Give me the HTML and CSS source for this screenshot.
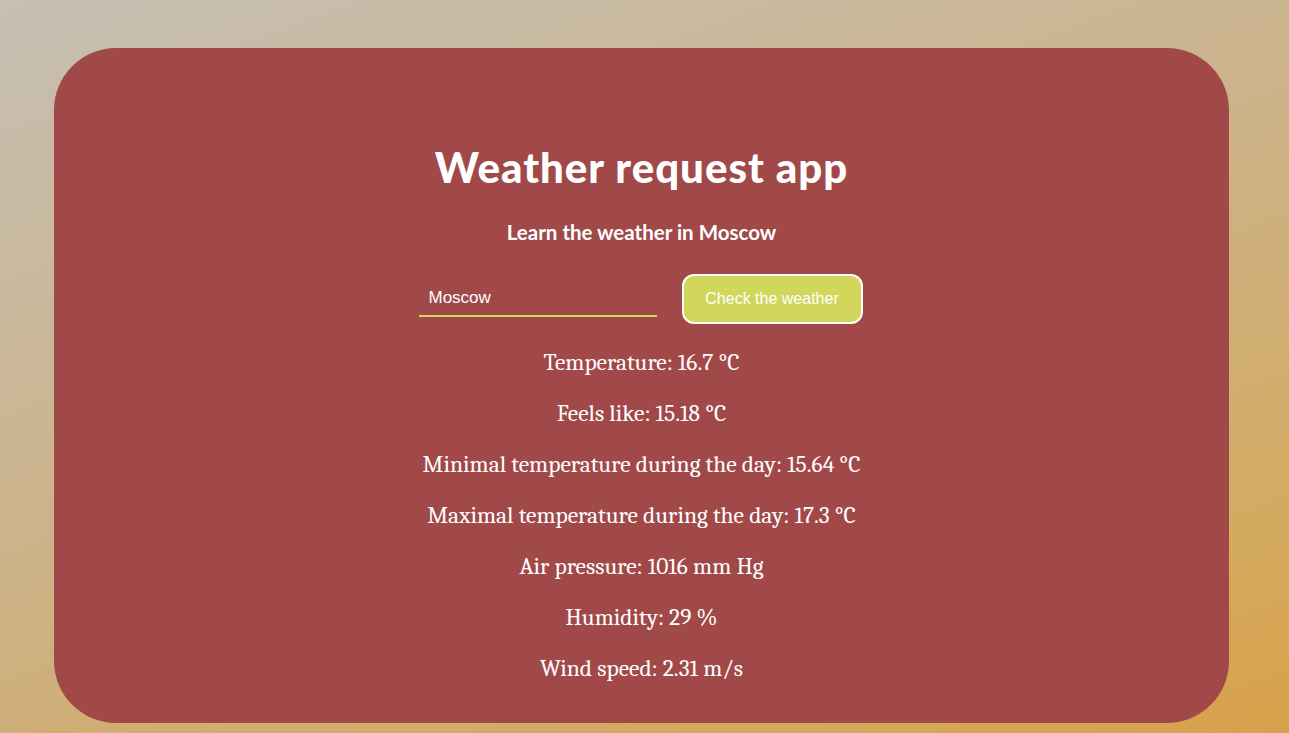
FILE: index.html
```html
<!DOCTYPE html>
<html lang="en">
<head>
<meta charset="utf-8">
<title>Weather request app</title>
<link rel="stylesheet" href="styles.css">
</head>
<body>
<main class="card">
  <h1 class="title">Weather request app</h1>
  <p class="subtitle">Learn the weather in Moscow</p>
  <form class="search">
    <input class="city" type="text" value="Moscow">
    <button class="check" type="button">Check the weather</button>
  </form>
  <section class="results">
    <p class="row">Temperature: 16.7 °C</p>
    <p class="row">Feels like: 15.18 °C</p>
    <p class="row">Minimal temperature during the day: 15.64 °C</p>
    <p class="row">Maximal temperature during the day: 17.3 °C</p>
    <p class="row">Air pressure: 1016 mm Hg</p>
    <p class="row">Humidity: 29 %</p>
    <p class="row">Wind speed: 2.31 m/s</p>
  </section>
</main>
<div class="watermark">Activate Windows</div>
</body>
</html>
```
FILE: styles.css
```css
html, body {
  margin: 0;
  padding: 0;
  height: 100%;
  overflow: hidden;
}
body {
  background: linear-gradient(160deg, #c6bfb3 0%, #ccb38b 45%, #d4a95c 85%, #d8a04a 100%);
  font-family: "Cambria", "Liberation Serif", serif;
  color: #ffffff;
  position: relative;
}
.card {
  box-sizing: border-box;
  width: 1175px;
  height: 675px;
  margin: 48px 0 0 54px;
  background: #a14949;
  border-radius: 62px;
  display: flex;
  flex-direction: column;
  align-items: center;
  padding-top: 94px;
}
.title {
  margin: 0;
  font-family: "Comic Sans MS", "Lato", sans-serif;
  font-weight: 900;
  font-size: 42px;
  line-height: 50px;
  letter-spacing: 1px;
}
.subtitle {
  margin: 28px 0 0 0;
  font-family: "Comic Sans MS", "Lato", sans-serif;
  font-weight: 700;
  font-size: 20.5px;
  line-height: 24px;
}
.search {
  display: flex;
  align-items: flex-start;
  gap: 25px;
  margin: 30px 2px 0 0;
}
.city {
  box-sizing: border-box;
  width: 238px;
  height: 43px;
  padding: 6px 10px 0 10px;
  background: transparent;
  border: none;
  border-bottom: 2px solid #d2d65c;
  color: #ffffff;
  font-family: "Liberation Sans", Arial, sans-serif;
  font-size: 17px;
  outline: none;
}
.check {
  box-sizing: border-box;
  width: 181px;
  height: 50px;
  background: #d2d65b;
  border: 2px solid #ffffff;
  border-radius: 12px;
  color: #ffffff;
  font-family: "Liberation Sans", Arial, sans-serif;
  font-size: 16px;
  cursor: pointer;
}
.results {
  display: flex;
  flex-direction: column;
  align-items: center;
  margin-top: 25px;
}
.row {
  margin: 0 0 23px 0;
  font-size: 23.5px;
  line-height: 28px;
}
.watermark {
  position: absolute;
  left: 1075px;
  top: 727px;
  font-family: "Open Sans", sans-serif;
  font-size: 24px;
  line-height: 30px;
  color: rgba(205, 200, 190, 0.85);
  white-space: nowrap;
}
```
